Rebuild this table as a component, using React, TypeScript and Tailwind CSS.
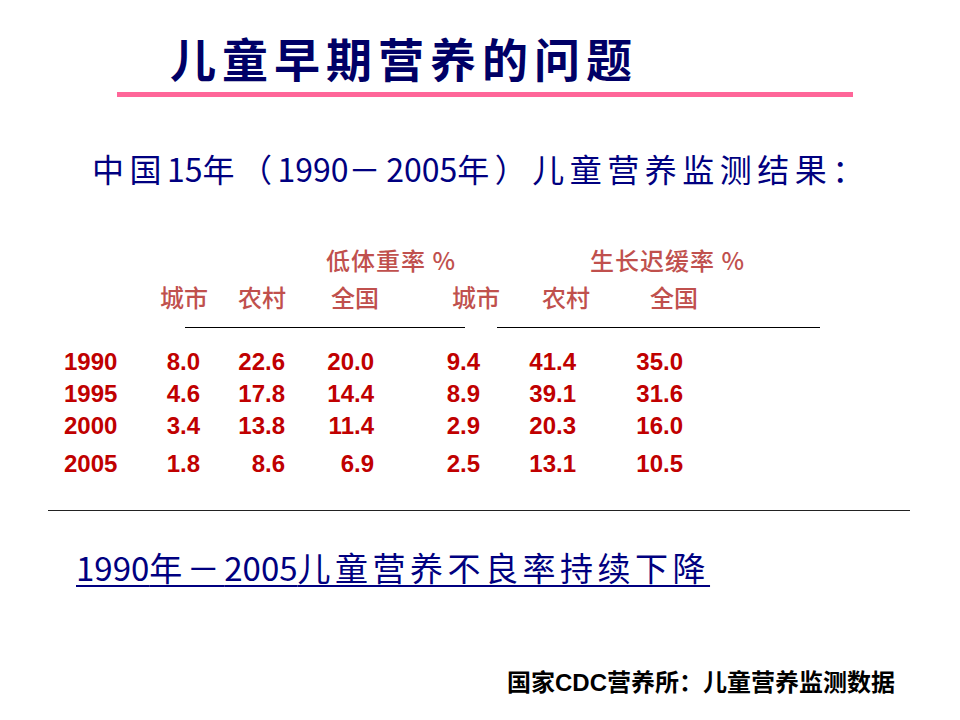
import React from "react";

const cjk = { fontFamily: '"Noto Sans CJK SC", "Noto Sans", sans-serif' };
const num = { fontFamily: '"Liberation Sans", Arial, sans-serif' };

const rows = [
  { y: "1990", v: ["8.0", "22.6", "20.0", "9.4", "41.4", "35.0"], cls: "" },
  { y: "1995", v: ["4.6", "17.8", "14.4", "8.9", "39.1", "31.6"], cls: "" },
  { y: "2000", v: ["3.4", "13.8", "11.4", "2.9", "20.3", "16.0"], cls: "" },
  { y: "2005", v: ["1.8", "8.6", "6.9", "2.5", "13.1", "10.5"], cls: "mt-[6px]" },
];

const widths = ["w-[36px]", "w-[85px]", "w-[89px]", "w-[106px]", "w-[96px]", "w-[107px]"];

function Mixed({ text }: { text: string }) {
  const parts = text.split(/(\d+)/).filter((p) => p.length > 0);
  return (
    <>
      {parts.map((p, i) =>
        /^\d+$/.test(p) ? (
          <span key={i} className="tracking-normal">
            {p}
          </span>
        ) : (
          <span key={i}>{p}</span>
        )
      )}
    </>
  );
}

export default function App() {
  return (
    <div className="w-[960px] h-[720px] bg-white overflow-hidden flex flex-col" style={cjk}>
      <div className="pt-[34px] pl-[170px] text-[46px] leading-[46px] tracking-[6px] font-bold text-[#000066]">
        儿童早期营养的问题
      </div>
      <div className="mt-[12px] ml-[117px] w-[736px] h-[5px] bg-[#ff6699]" />
      <div className="mt-[55px] pl-[92px] text-[32px] leading-[32px] tracking-[5.5px] text-[#000080] whitespace-nowrap">
        <Mixed text="中国15年（1990－2005年）儿童营养监测结果：" />
      </div>
      <div className="mt-[64px] flex pl-[326px] text-[24px] leading-[24px] tracking-[1px] text-[#c0504d] font-medium whitespace-nowrap">
        <div className="w-[264px]">低体重率 %</div>
        <div>生长迟缓率 %</div>
      </div>
      <div className="mt-[13px] flex pl-[160px] text-[24px] leading-[24px] text-[#c0504d] font-medium whitespace-nowrap">
        <div className="w-[78px]">城市</div>
        <div className="w-[93px]">农村</div>
        <div className="w-[121px]">全国</div>
        <div className="w-[90px]">城市</div>
        <div className="w-[108px]">农村</div>
        <div>全国</div>
      </div>
      <div className="mt-[18px] flex pl-[185px] gap-[32px]">
        <div className="w-[280px] h-px bg-black" />
        <div className="w-[323px] h-px bg-black" />
      </div>
      <div className="mt-[18px] flex flex-col text-[24px] leading-[32px] font-bold text-[#c00000]" style={num}>
        {rows.map((r) => (
          <div key={r.y} className={`flex pl-[64px] ${r.cls}`}>
            <div className="w-[100px]">{r.y}</div>
            {r.v.map((x, i) => (
              <div key={i} className={`${widths[i]} text-right`}>
                {x}
              </div>
            ))}
          </div>
        ))}
      </div>
      <div className="mt-[30px] ml-[48px] w-[862px] h-px bg-[#222]" />
      <div className="mt-[40px] pl-[76px] text-[33px] leading-[33px] tracking-[4.5px] text-[#000080] whitespace-nowrap">
        <span className="underline decoration-2 underline-offset-[4px]">
          <Mixed text="1990年－2005儿童营养不良率持续下降" />
        </span>
      </div>
      <div className="mt-[85px] flex justify-end pr-[65px] text-[24px] leading-[24px] font-bold text-black whitespace-nowrap">
        <span>
          国家<span style={num}>CDC</span>营养所：儿童营养监测数据
        </span>
      </div>
    </div>
  );
}
